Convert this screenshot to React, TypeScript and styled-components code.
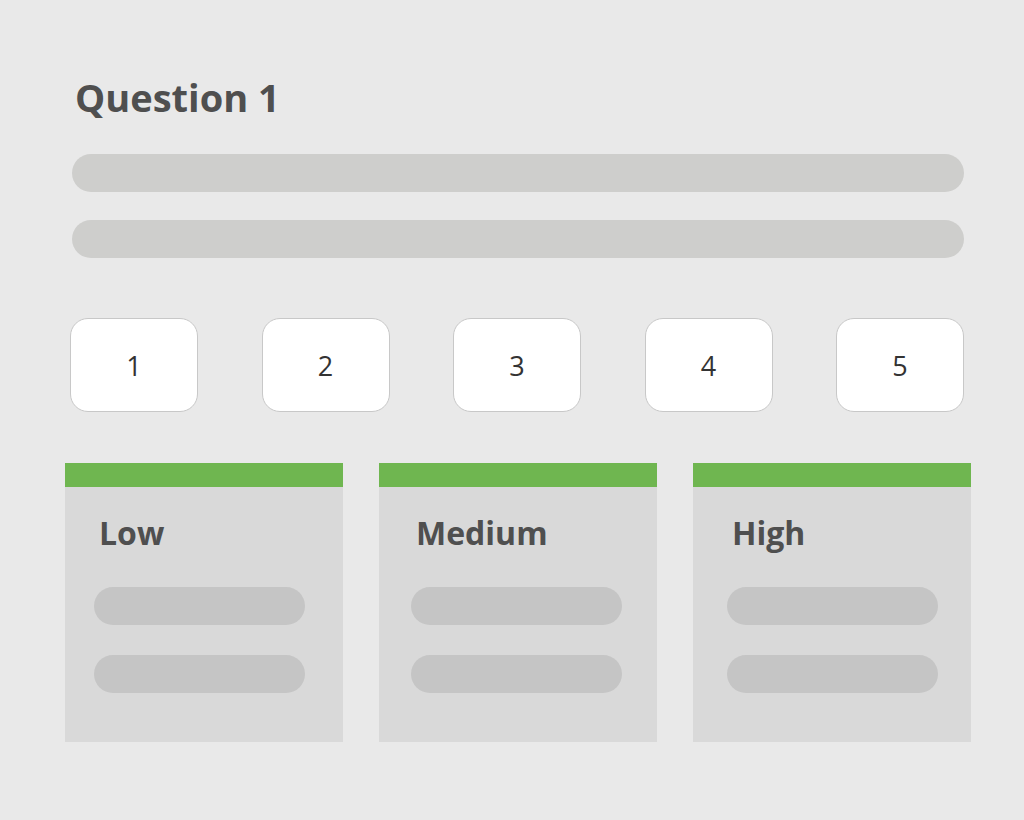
import styled, { createGlobalStyle } from "styled-components";

const GlobalStyle = createGlobalStyle`
  body {
    margin: 0;
    background: #e9e9e9;
    font-family: "Open Sans", "Liberation Sans", sans-serif;
  }
`;

const levels = [
  { name: "Low", inset: 29 },
  { name: "Medium", inset: 32 },
  { name: "High", inset: 34 },
];
const scores = [1, 2, 3, 4, 5];

const App = () => {
  return (
    <Page>
      <GlobalStyle />
      <Title>Question 1</Title>
      <Lines>
        <Line />
        <Line />
      </Lines>
      <ScoreRow>
        {scores.map((n) => (
          <ScoreButton key={n}>{n}</ScoreButton>
        ))}
      </ScoreRow>
      <Cards>
        {levels.map((level) => (
          <Card key={level.name} $inset={level.inset}>
            <CardTitle>{level.name}</CardTitle>
            <CardLine />
            <CardLine />
          </Card>
        ))}
      </Cards>
    </Page>
  );
};

export default App;

const Page = styled.div`
  width: 1024px;
  height: 820px;
  padding-top: 73px;
  box-sizing: border-box;
  display: flex;
  flex-direction: column;
`;

const Title = styled.h1`
  margin: 0 0 33px 75px;
  font-size: 38px;
  line-height: 48px;
  font-weight: 700;
  color: #4f4f4f;
`;

const Lines = styled.div`
  display: flex;
  flex-direction: column;
  gap: 28px;
  margin-left: 72px;
  width: 892px;
`;

const Line = styled.div`
  height: 38px;
  border-radius: 19px;
  background: #cececc;
`;

const ScoreRow = styled.div`
  display: flex;
  justify-content: space-between;
  margin: 60px 0 0 70px;
  width: 894px;
`;

const ScoreButton = styled.div`
  width: 126px;
  height: 92px;
  border: 1px solid #c8c8c8;
  border-radius: 18px;
  background: #fff;
  display: flex;
  align-items: center;
  justify-content: center;
  font-size: 27px;
  color: #333;
`;

const Cards = styled.div`
  display: flex;
  justify-content: space-between;
  width: 906px;
  margin: 51px 0 0 65px;
`;

const Card = styled.div<{ $inset: number }>`
  width: 278px;
  height: 279px;
  box-sizing: border-box;
  background: #d9d9d9;
  border-top: 24px solid #6fb650;
  padding: 26px 0 0 ${({ $inset }) => $inset}px;
  display: flex;
  flex-direction: column;
  gap: 30px;
`;

const CardTitle = styled.div`
  margin: 0 0 4px 5px;
  font-size: 32px;
  line-height: 40px;
  font-weight: 700;
  color: #4f4f4f;
`;

const CardLine = styled.div`
  width: 211px;
  height: 38px;
  border-radius: 19px;
  background: #c5c5c5;
`;
